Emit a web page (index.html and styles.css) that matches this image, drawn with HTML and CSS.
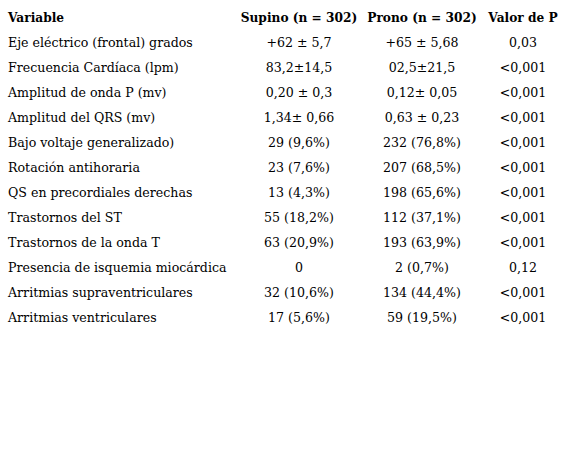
FILE: index.html
```html
<!DOCTYPE html>
<html lang="es">
<head>
<meta charset="utf-8">
<link rel="stylesheet" href="styles.css">
</head>
<body>
<table class="data">
  <colgroup>
    <col class="c-var"><col class="c-sup"><col class="c-pro"><col class="c-p">
  </colgroup>
  <thead>
    <tr><th class="left">Variable</th><th>Supino (n = 302)</th><th>Prono (n = 302)</th><th>Valor de P</th></tr>
  </thead>
  <tbody>
    <tr><td class="left">Eje eléctrico (frontal) grados</td><td>+62 ± 5,7</td><td>+65 ± 5,68</td><td>0,03</td></tr>
    <tr><td class="left">Frecuencia Cardíaca (lpm)</td><td>83,2±14,5</td><td>02,5±21,5</td><td>&lt;0,001</td></tr>
    <tr><td class="left">Amplitud de onda P (mv)</td><td>0,20 ± 0,3</td><td>0,12± 0,05</td><td>&lt;0,001</td></tr>
    <tr><td class="left">Amplitud del QRS (mv)</td><td>1,34± 0,66</td><td>0,63 ± 0,23</td><td>&lt;0,001</td></tr>
    <tr><td class="left">Bajo voltaje generalizado)</td><td>29 (9,6%)</td><td>232 (76,8%)</td><td>&lt;0,001</td></tr>
    <tr><td class="left">Rotación antihoraria</td><td>23 (7,6%)</td><td>207 (68,5%)</td><td>&lt;0,001</td></tr>
    <tr><td class="left">QS en precordiales derechas</td><td>13 (4,3%)</td><td>198 (65,6%)</td><td>&lt;0,001</td></tr>
    <tr><td class="left">Trastornos del ST</td><td>55 (18,2%)</td><td>112 (37,1%)</td><td>&lt;0,001</td></tr>
    <tr><td class="left">Trastornos de la onda T</td><td>63 (20,9%)</td><td>193 (63,9%)</td><td>&lt;0,001</td></tr>
    <tr><td class="left">Presencia de isquemia miocárdica</td><td>0</td><td>2 (0,7%)</td><td>0,12</td></tr>
    <tr><td class="left">Arritmias supraventriculares</td><td>32 (10,6%)</td><td>134 (44,4%)</td><td>&lt;0,001</td></tr>
    <tr><td class="left">Arritmias ventriculares</td><td>17 (5,6%)</td><td>59 (19,5%)</td><td>&lt;0,001</td></tr>
  </tbody>
</table>
</body>
</html>
```
FILE: styles.css
```css
html, body { margin: 0; padding: 0; background: #fff; }
body { padding: 5px 0 0 8px; font-family: "DejaVu Serif", serif; font-size: 12.6px; color: #000; }
.data { border-collapse: collapse; table-layout: fixed; width: 554px; }
.c-var { width: 230px; }
.c-sup { width: 122px; }
.c-pro { width: 124px; }
.c-p { width: 78px; }
.data th, .data td { height: 25px; padding: 0; text-align: center; vertical-align: middle; white-space: nowrap; font-weight: normal; }
.data th { font-weight: bold; font-size: 12.2px; }
.data .left { text-align: left; }
```
